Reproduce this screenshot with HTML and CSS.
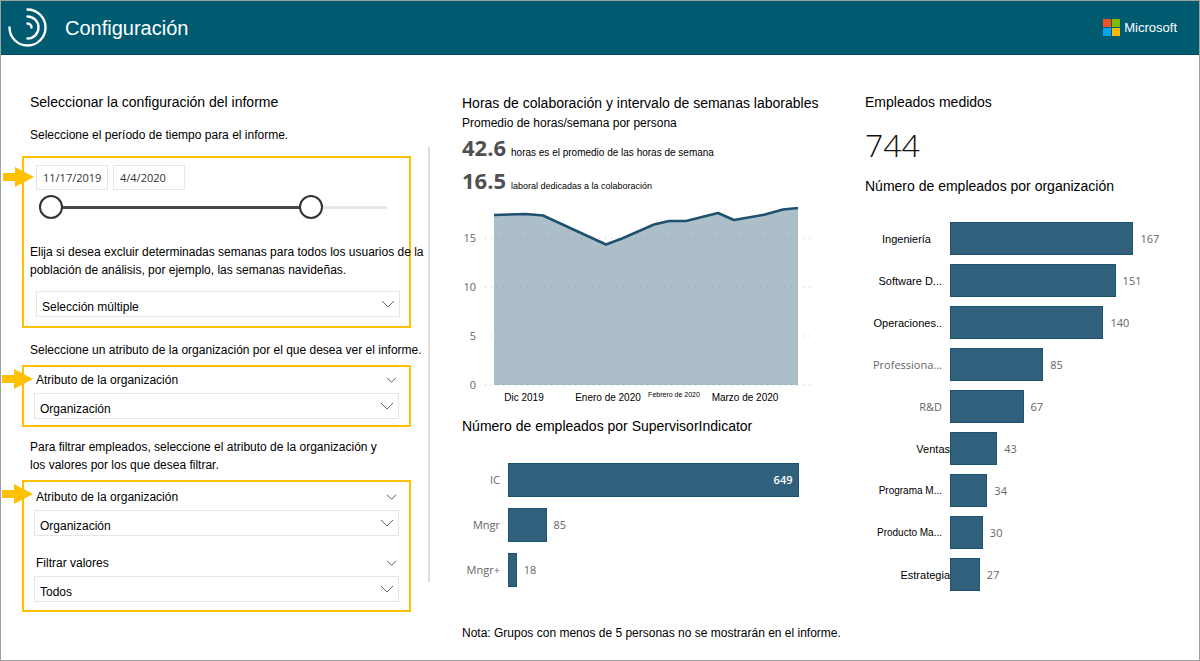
FILE: index.html
```html
<!DOCTYPE html>
<html lang="es">
<head>
<meta charset="utf-8">
<title>Configuración</title>
<link rel="stylesheet" href="styles.css">
</head>
<body>
<div class="page">
  <header class="topbar">
    <svg class="logo" viewBox="0 0 40 40" aria-hidden="true">
      <path d="M20.500 1.500a18 18 0 1 1-18 18"/>
      <path d="M20.500 8.500a11 11 0 0 1 0 22"/>
      <path d="M20.500 15.500a4 4 0 0 1 4 4"/>
    </svg>
    <h1 class="topbar-title">Configuración</h1>
    <div class="brand">
      <svg class="brand-mark" viewBox="0 0 17 17" aria-hidden="true">
        <path fill="#f65022" d="M0 0h8v8H0z"/><path fill="#7fba00" d="M9 0h8v8H9z"/>
        <path fill="#00a4ef" d="M0 9h8v8H0z"/><path fill="#ffb900" d="M9 9h8v8H9z"/>
      </svg>
      <span>Microsoft</span>
    </div>
  </header>

  <main class="content">
    <section class="settings">
      <h2 class="heading indent">Seleccionar la configuración del informe</h2>
      <p class="text indent intro">Seleccione el período de tiempo para el informe.</p>

      <div class="highlight period">
        <svg class="arrow" viewBox="0 0 31 20" aria-hidden="true"><path d="M0 6h12V0l19 10-19 10v-6H0z"/></svg>
        <div class="dates">
          <input class="date" type="text" value="11/17/2019" aria-label="Fecha de inicio">
          <input class="date" type="text" value="4/4/2020" aria-label="Fecha de fin">
        </div>
        <div class="slider">
          <div class="rail"><div class="rail-fill" style="width:78%"></div></div>
          <input class="range" type="range" min="0" max="173" value="0" aria-label="Inicio del período">
          <input class="range" type="range" min="0" max="173" value="139" aria-label="Fin del período">
        </div>
        <label class="text weeks-label" for="weeks">Elija si desea excluir determinadas semanas para todos los usuarios de la<br>población de análisis, por ejemplo, las semanas navideñas.</label>
        <div class="picker">
          <select id="weeks" class="select"><option>Selección múltiple</option></select>
          <svg class="chevron" viewBox="0 0 14 8" aria-hidden="true"><path d="M1 1l6 6 6-6"/></svg>
        </div>
      </div>

      <p class="text indent view-text">Seleccione un atributo de la organización por el que desea ver el informe.</p>
      <div class="highlight attribute">
        <svg class="arrow" viewBox="0 0 31 20" aria-hidden="true"><path d="M0 6h12V0l19 10-19 10v-6H0z"/></svg>
        <div class="field-head">
          <label class="text" for="attr-view">Atributo de la organización</label>
          <button class="toggle" type="button" aria-label="Contraer"><svg viewBox="0 0 14 8" aria-hidden="true"><path d="M1 1l6 6 6-6"/></svg></button>
        </div>
        <div class="picker">
          <select id="attr-view" class="select"><option>Organización</option></select>
          <svg class="chevron" viewBox="0 0 14 8" aria-hidden="true"><path d="M1 1l6 6 6-6"/></svg>
        </div>
      </div>

      <p class="text indent filter-text">Para filtrar empleados, seleccione el atributo de la organización y<br>los valores por los que desea filtrar.</p>
      <div class="highlight attribute filter">
        <svg class="arrow" viewBox="0 0 31 20" aria-hidden="true"><path d="M0 6h12V0l19 10-19 10v-6H0z"/></svg>
        <div class="field-head">
          <label class="text" for="attr-filter">Atributo de la organización</label>
          <button class="toggle" type="button" aria-label="Contraer"><svg viewBox="0 0 14 8" aria-hidden="true"><path d="M1 1l6 6 6-6"/></svg></button>
        </div>
        <div class="picker">
          <select id="attr-filter" class="select"><option>Organización</option></select>
          <svg class="chevron" viewBox="0 0 14 8" aria-hidden="true"><path d="M1 1l6 6 6-6"/></svg>
        </div>
        <div class="field-head second">
          <label class="text" for="values">Filtrar valores</label>
          <button class="toggle" type="button" aria-label="Contraer"><svg viewBox="0 0 14 8" aria-hidden="true"><path d="M1 1l6 6 6-6"/></svg></button>
        </div>
        <div class="picker">
          <select id="values" class="select"><option>Todos</option></select>
          <svg class="chevron" viewBox="0 0 14 8" aria-hidden="true"><path d="M1 1l6 6 6-6"/></svg>
        </div>
      </div>
    </section>

    <div class="divider"></div>

    <section class="hours">
      <h2 class="heading">Horas de colaboración y intervalo de semanas laborables</h2>
      <p class="text subtitle">Promedio de horas/semana por persona</p>
      <p class="stat"><strong>42.6</strong><span>horas es el promedio de las horas de semana</span></p>
      <p class="stat"><strong>16.5</strong><span class="small">laboral dedicadas a la colaboración</span></p>

      <svg class="area-chart" viewBox="0 0 378 210" role="img" aria-label="Horas de colaboración por semana">
        <path class="area" d="M32 15l32-.5 16 1.500 64 29 16-6 32-14 15-4h17l31-8 16 7 31-6 16-4 18-2v177H32z"/>
        <g class="grid">
          <path d="M23 38h326"/><path d="M23 87h326"/><path d="M23 136h326"/><path d="M23 185h326"/>
        </g>
        <path class="line" d="M32 15l32-1 17 1.500 63 29 16-6 32-14 15-3.500h17l32-8 16 7 31-5.500 18-5 15-1.500"/>
        <g class="y-axis">
          <text x="14" y="42">15</text><text x="14" y="91">10</text><text x="14" y="140">5</text><text x="14" y="189">0</text>
        </g>
        <g class="x-axis">
          <text x="62" y="201">Dic 2019</text><text x="146" y="201">Enero de 2020</text>
          <text class="tiny" x="212" y="197">Febrero de 2020</text><text x="283" y="201">Marzo de 2020</text>
        </g>
      </svg>

      <h2 class="heading supervisor-title">Número de empleados por SupervisorIndicator</h2>
      <div class="bars supervisor">
        <span class="name soft">IC</span><div class="track"><div class="bar" style="width:87.8%"><span class="inside">649</span></div></div>
        <span class="name soft">Mngr</span><div class="track"><div class="bar" style="width:11.6%"></div><span class="value">85</span></div>
        <span class="name soft">Mngr+</span><div class="track"><div class="bar" style="width:2.6%"></div><span class="value">18</span></div>
      </div>
      <p class="text note">Nota: Grupos con menos de 5 personas no se mostrarán en el informe.</p>
    </section>

    <section class="employees">
      <h2 class="heading">Empleados medidos</h2>
      <p class="total">744</p>
      <h2 class="heading">Número de empleados por organización</h2>
      <div class="bars organization">
        <span class="name inset">Ingeniería</span><div class="track"><div class="bar" style="width:81.5%"></div><span class="value">167</span></div>
        <span class="name">Software D...</span><div class="track"><div class="bar" style="width:73.6%"></div><span class="value">151</span></div>
        <span class="name">Operaciones..</span><div class="track"><div class="bar" style="width:68.2%"></div><span class="value">140</span></div>
        <span class="name soft">Professiona...</span><div class="track"><div class="bar" style="width:41.4%"></div><span class="value">85</span></div>
        <span class="name soft">R&amp;D</span><div class="track"><div class="bar" style="width:32.7%"></div><span class="value">67</span></div>
        <span class="name flush">Ventas</span><div class="track"><div class="bar" style="width:21%"></div><span class="value">43</span></div>
        <span class="name compact">Programa M...</span><div class="track"><div class="bar" style="width:16.6%"></div><span class="value">34</span></div>
        <span class="name compact">Producto Ma...</span><div class="track"><div class="bar" style="width:14.6%"></div><span class="value">30</span></div>
        <span class="name flush">Estrategia</span><div class="track"><div class="bar" style="width:13.2%"></div><span class="value">27</span></div>
      </div>
    </section>
  </main>
</div>
</body>
</html>
```
FILE: styles.css
```css
* { box-sizing: border-box; }

body {
  margin: 0;
  font-family: "Liberation Sans", Arial, sans-serif;
  font-size: 12px;
  line-height: 18px;
  color: #000;
  background: #fff;
}

h1, h2, p { margin: 0; font-weight: 400; }

.page {
  display: flex;
  flex-direction: column;
  min-height: 100vh;
  border: 1px solid #a0a0a0;
}

/* Top bar */
.topbar {
  display: flex;
  align-items: center;
  height: 54px;
  padding: 0 22px 0 6px;
  color: #fff;
  background: #005a70;
  border-bottom: 1px solid #004c66;
}
.logo { width: 40px; height: 40px; fill: none; stroke: #fff; stroke-width: 2.4; stroke-linecap: round; }
.topbar-title { margin-left: 18px; font-size: 20px; line-height: 24px; }
.brand { display: flex; align-items: center; gap: 4px; margin-left: auto; font-size: 13px; }
.brand-mark { width: 17px; height: 17px; }

/* Columns */
.content {
  flex: 1;
  display: grid;
  grid-template-columns: minmax(0, 427fr) 2px minmax(0, 435fr) minmax(0, 334fr);
}
.settings { padding: 38px 17px 0 21px; }
.hours { padding: 39px 25px 16px 32px; }
.employees { padding: 38px 24px 0 0; }
.divider { margin: 92px 0 78px; background: #dcdcdc; }

.heading { font-size: 14px; line-height: 18px; white-space: nowrap; }
.text { white-space: nowrap; }
.indent { margin-left: 8px; }

/* Settings */
.intro { margin-top: 15px; }
.view-text { margin-top: 13px; }
.filter-text { margin-top: 11px; }

.highlight {
  position: relative;
  display: flex;
  flex-direction: column;
  border: 2px solid #ffc000;
}
.arrow {
  position: absolute;
  left: -22px;
  top: 2px;
  width: 31px;
  height: 20px;
  fill: #ffc000;
}
.period { margin-top: 12px; padding: 7px 9px 9px 12px; }
.period .arrow { left: -21px; top: 9px; }
.attribute { margin-top: 6px; padding: 4px 10px 6px; gap: 4px; }
.filter { padding: 6px 10px 8px; }

.dates { display: flex; gap: 5px; }
.date {
  width: 72px;
  height: 25px;
  padding: 0 6px;
  border: 1px solid #e6e6e6;
  font: 11px "Open Sans", sans-serif;
  color: #333;
  background: #fff;
}

.slider { display: grid; align-items: center; margin: 5px 13px 0 3px; }
.rail, .range { grid-area: 1 / 1; }
.rail { height: 3px; background: #e6e6e6; }
.rail-fill { height: 3px; background: #4a4745; }
.range {
  appearance: none;
  width: 100%;
  height: 24px;
  margin: 0;
  background: transparent;
  pointer-events: none;
}
.range::-webkit-slider-thumb {
  appearance: none;
  width: 24px;
  height: 24px;
  border: 2px solid #333;
  border-radius: 50%;
  background: #fff;
  pointer-events: auto;
}

.weeks-label { margin: 24px 0 12px -6px; }

.picker { display: grid; align-items: center; }
.picker > * { grid-area: 1 / 1; }
.select {
  appearance: none;
  width: 100%;
  height: 26px;
  padding: 5px 24px 0 5px;
  border: 1px solid #e6e6e6;
  border-radius: 0;
  font: inherit;
  color: #000;
  background: #fff;
}
.chevron {
  justify-self: end;
  width: 14px;
  height: 8px;
  margin-right: 5px;
  fill: none;
  stroke: #666;
  pointer-events: none;
}
.field-head { display: flex; align-items: center; justify-content: space-between; padding: 0 2px; }
.second { margin-top: 14px; }
.toggle { display: flex; padding: 0; border: 0; background: none; }
.toggle svg { width: 11px; height: 6px; fill: none; stroke: #555; stroke-width: 1.3; }

/* Hours */
.subtitle { margin-top: 2px; }
.stat { display: flex; align-items: baseline; gap: 5px; height: 33px; font-size: 10px; line-height: 18px; white-space: nowrap; }
.stat strong { font: 700 22px/30px "Open Sans", sans-serif; color: #505050; }
.stat .small { font-size: 9px; }

.area-chart { display: block; width: 100%; margin-top: 2px; }
.area { fill: #acbfc9; }
.line { fill: none; stroke: #1c5170; stroke-width: 2.5; stroke-linejoin: round; }
.grid { fill: none; stroke: #6f7f88; stroke-opacity: .5; stroke-dasharray: 1 5; }
.y-axis { font: 11px "Open Sans", sans-serif; fill: #666; text-anchor: end; }
.x-axis { font-size: 10px; text-anchor: middle; }
.tiny { font-size: 7px; }

.supervisor-title { margin-top: 7px; }
.note { margin-top: 37px; }

/* Bar charts */
.bars { display: grid; align-items: center; font-size: 11px; line-height: 16px; white-space: nowrap; }
.supervisor { grid-template-columns: 46px minmax(0, 1fr); gap: 11px 0; margin-top: 28px; }
.organization { grid-template-columns: 85px minmax(0, 1fr); gap: 9px 0; margin-top: 27px; }
.name { padding-right: 8px; text-align: right; }
.soft { font-family: "Open Sans", sans-serif; color: #666; }
.inset { padding-right: 19px; }
.flush { padding-right: 0; }
.compact { font-size: 10px; }
.track { display: flex; align-items: center; gap: 7px; }
.bar {
  display: flex;
  align-items: center;
  justify-content: flex-end;
  height: 33px;
  padding-right: 6px;
  border: 1px solid #1d5270;
  background: #30607c;
}
.supervisor .bar { height: 34px; }
.value, .inside { font-family: "Open Sans", sans-serif; }
.value { color: #666; }
.inside { font-weight: 600; color: #fff; }

/* Employees */
.total { margin: 12px 0 10px; font: 300 32px/44px "Open Sans", sans-serif; color: #111; }
```
